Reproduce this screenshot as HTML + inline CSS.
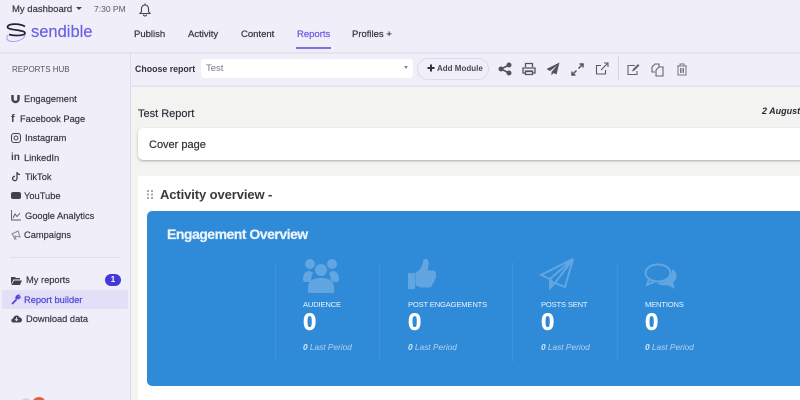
<!DOCTYPE html>
<html lang="en"><head><meta charset="utf-8"><title>Sendible Reports</title>
<style>
html,body{margin:0;padding:0;width:800px;height:400px;overflow:hidden}
body{position:relative;background:#f0eff9;font-family:"Liberation Sans",sans-serif;color:#33323c}
.w{position:absolute;left:0;top:0;width:800px;height:400px;overflow:hidden;filter:blur(.3px)}
.a,.t{position:absolute}
.t{white-space:nowrap;line-height:14px;font-size:9.5px;margin-top:1px}
svg{position:absolute;overflow:visible}
.n{font-size:9.5px;font-weight:normal;color:#3b3a44;top:27px;-webkit-text-stroke:.25px #3b3a44}
.s{font-size:9.3px;color:#3b3a44;-webkit-text-stroke:.2px #3b3a44}
.lab{font-size:7.6px;letter-spacing:-.17px;color:#eaf4fc;top:297px}
.zero{font-size:24px;font-weight:bold;color:#fff;top:314px;line-height:16px;-webkit-text-stroke:.5px #fff}
.lp{font-size:8.3px;font-style:italic;color:#b5d4ee;top:339px}
.lp b{color:#d5e7f6}
.vl{position:absolute;top:262px;height:100px;width:1px;background:#3c92dc}
</style></head><body><div class="w">
<div class="a" style="left:0;top:52px;width:800px;height:2px;background:#e4e3ef"></div>
<div class="a" style="left:130px;top:54px;width:1px;height:346px;background:#dcdbe8"></div>
<div class="a" style="left:131px;top:85px;width:669px;height:2px;background:#e4e3ef"></div>
<div class="a" style="left:131px;top:87px;width:669px;height:313px;background:#f3f3f1"></div>

<!-- top -->
<div class="t" style="left:12px;top:2px;font-size:9.5px;color:#3b3a44;-webkit-text-stroke:.2px #3b3a44">My dashboard</div>
<div class="a" style="left:76px;top:7px;border:3px solid transparent;border-top:3px solid #44434d"></div>
<div class="t" style="left:94px;top:1px;font-size:8.5px;color:#5a5963">7:30 PM</div>
<svg style="left:138px;top:2px" width="14" height="15" viewBox="0 0 14 15"><path d="M2 11.5h10l-1.5-2V6.500a3.500 3.500 0 0 0-7 0v3zM5.500 12.500a1.500 1.500 0 0 0 3 0M7 1.500V3" fill="none" stroke="#44434d" stroke-width="1.100"/></svg>

<!-- logo -->
<svg style="left:6px;top:23px" width="22" height="19" viewBox="0 0 22 19"><path d="M2 12C-1 16 2 18.500 7 18.500 13 18.500 20 15 19 11" fill="none" stroke="#a79cf0" stroke-width="1"/><path d="M19 3.500C13 0 2 .5 1.500 4 1.500 7.500 19 6.500 19 10 19 13 8 13 3 11.500" fill="none" stroke="#25243a" stroke-width="1.700"/></svg>
<div class="t" style="left:31px;top:21px;font-size:16.500px;line-height:20px;color:#6d62e4;-webkit-text-stroke:.2px #6d62e4">sendible</div>

<!-- nav -->
<div class="t n" style="left:134px">Publish</div>
<div class="t n" style="left:188px">Activity</div>
<div class="t n" style="left:241px">Content</div>
<div class="t n" style="left:297px;color:#6a5fe0;-webkit-text-stroke:.25px #6a5fe0">Reports</div>
<div class="t n" style="left:352px">Profiles +</div>
<div class="a" style="left:296px;top:47px;width:35px;height:1.500px;background:#7b70e6"></div>

<!-- toolbar -->
<div class="t" style="left:135px;top:61px;font-size:8.800px;font-weight:bold;color:#33323c">Choose report</div>
<div class="a" style="left:201px;top:59px;width:212px;height:19px;background:#fff;border-radius:3px"></div>
<div class="t" style="left:206px;top:61px;font-size:9.500px;color:#77767f">Test</div>
<div class="a" style="left:404px;top:66px;border:2px solid transparent;border-top:3px solid #88878f"></div>
<div class="a" style="left:417px;top:58px;width:70px;height:20px;border:1px solid #dbdae8;border-radius:11px"></div>
<svg style="left:427px;top:64px" width="8" height="8"><path d="M4 .5v7M.5 4h7" stroke="#33323c" stroke-width="2"/></svg>
<div class="t" style="left:437px;top:61px;font-size:8px;font-weight:bold;color:#4a4954">Add Module</div>
<svg style="left:498px;top:62px" width="14" height="14" viewBox="0 0 14 14"><path d="M11 3L3 7l8 4" fill="none" stroke="#55545e" stroke-width="1.600"/><circle cx="11" cy="3" r="2.500" fill="#55545e"/><circle cx="3" cy="7" r="2.500" fill="#55545e"/><circle cx="11" cy="11" r="2.500" fill="#55545e"/></svg>
<svg style="left:522px;top:62px" width="14" height="14" viewBox="0 0 14 14"><path d="M3.500 5V1.500h7V5M1 6h12v5h-2.500V9h-7v2H1zM3.500 9.500h7v3h-7z" fill="none" stroke="#55545e" stroke-width="1.300"/></svg>
<svg style="left:546px;top:62px" width="14" height="14" viewBox="0 0 14 14"><path d="M13.500.5L.5 7l3.500 2L11 3.500 5.500 10v3.500l2-2.500 3 1.500z" fill="#55545e"/></svg>
<svg style="left:571px;top:63px" width="13" height="13" viewBox="0 0 13 13"><path d="M7.500 5.500L12 1M1 12l4.500-4.500M8.500 1H12v3.500M1 8.500V12h3.500" fill="none" stroke="#55545e" stroke-width="1.500"/></svg>
<svg style="left:595px;top:62px" width="14" height="14" viewBox="0 0 14 14"><path d="M10.500 8v4H1.500V3.500H6M6 8l7-7M9 1h4v4" fill="none" stroke="#5a5963" stroke-width="1.100"/></svg>
<div class="a" style="left:618px;top:56px;width:1px;height:24px;background:#d6d5e2"></div>
<svg style="left:627px;top:63px" width="13" height="13" viewBox="0 0 13 13"><path d="M10 8v3.500H1v-9h7" fill="none" stroke="#66656f" stroke-width="1.100"/><path d="M5 8.500l1-2.500 5-5 1.500 1.500-5 5z" fill="#66656f"/></svg>
<svg style="left:651px;top:63px" width="13" height="14" viewBox="0 0 13 14"><path d="M4 9H1V4l3-3h4v3M5 7l3-3h4v9H5z" fill="none" stroke="#66656f" stroke-width="1.100"/></svg>
<svg style="left:676px;top:63px" width="12" height="13" viewBox="0 0 12 13"><path d="M1 3h10M4 3V1h4v2M2 3v9h8V3M4.500 5v5M6 5v5M7.500 5v5" fill="none" stroke="#777680" stroke-width="1"/></svg>

<!-- sidebar -->
<div class="t" style="left:12px;top:62px;font-size:8px;color:#55545e">REPORTS HUB</div>
<svg style="left:11px;top:95px" width="9" height="9"><path d="M1.500 0v4a3 3 0 0 0 6 0V0" fill="none" stroke="#44434d" stroke-width="2.500"/></svg>
<div class="t s" style="left:24px;top:91px">Engagement</div>
<div class="t" style="left:11px;top:111px;font-size:11px;font-weight:bold;color:#44434d">f</div>
<div class="t s" style="left:20px;top:111px">Facebook Page</div>
<svg style="left:11px;top:133px" width="10" height="10"><rect x=".5" y=".5" width="9" height="9" rx="2.500" fill="none" stroke="#44434d"/><circle cx="5" cy="5" r="2" fill="none" stroke="#44434d"/></svg>
<div class="t s" style="left:25px;top:130px">Instagram</div>
<div class="t" style="left:11px;top:150px;font-size:10px;font-weight:bold;color:#44434d">in</div>
<div class="t s" style="left:24px;top:150px">LinkedIn</div>
<svg style="left:11px;top:171px" width="10" height="11" viewBox="0 0 10 11"><path d="M6 1v6.500a2.200 2.200 0 1 1-2-2.200M6 1.500c.5 1.500 1.500 2 3 2" fill="none" stroke="#44434d" stroke-width="1.300"/></svg>
<div class="t s" style="left:25px;top:169px">TikTok</div>
<div class="a" style="left:11px;top:192px;width:10px;height:7px;background:#44434d;border-radius:2px"></div>
<div class="t s" style="left:24px;top:188px">YouTube</div>
<svg style="left:11px;top:210px" width="10" height="11"><path d="M.5 0v10h9.500M2 8l2-4 2 2.500L9 3" fill="none" stroke="#5a5963" stroke-width=".9"/></svg>
<div class="t s" style="left:25px;top:208px">Google Analytics</div>
<svg style="left:11px;top:230px" width="11" height="10"><path d="M1 4l6-3 2 6-5-1 1 3H3.500L2.500 6z" fill="none" stroke="#888791" stroke-width="1"/></svg>
<div class="t s" style="left:24px;top:227px">Campaigns</div>
<div class="a" style="left:10px;top:257px;width:110px;height:1px;background:#dfdeea"></div>
<svg style="left:11px;top:276px" width="11" height="9"><path d="M0 1h4l1 1h4v1.500H2.500L0 8.500zM3 4.500h8L9 9H.5z" fill="#44434d"/></svg>
<div class="t s" style="left:26px;top:272px">My reports</div>
<div class="a" style="left:105px;top:274px;width:16px;height:12px;border-radius:6px;background:#4438d8;color:#fff;font-size:8px;font-weight:bold;line-height:12px;text-align:center">1</div>
<div class="a" style="left:2px;top:290px;width:126px;height:19px;background:#e2dff7;border-radius:2px"></div>
<svg style="left:11px;top:295px" width="10" height="10"><path d="M1 9l4.500-4.500M9.500 1.500L7.500 3.500 6.500 3 6 2l1.500-1.500C6 .5 4.500 2 5.500 4.500" fill="none" stroke="#4f43dc" stroke-width="1.700"/></svg>
<div class="t s" style="left:24px;top:292px;color:#4f43dc;-webkit-text-stroke:.2px #4f43dc">Report builder</div>
<svg style="left:11px;top:314px" width="11" height="9"><path d="M2.500 8.500a2 2 0 0 1-.3-4A3.300 3.300 0 0 1 8.500 3.500a2.500 2.500 0 0 1 0 5z" fill="#44434d"/><path d="M5.500 3v3.500M4 5.200l1.500 1.500L7 5.200" fill="none" stroke="#f0eff9" stroke-width=".8"/></svg>
<div class="t s" style="left:26px;top:311px">Download data</div>
<div class="a" style="left:32px;top:397px;width:14px;height:14px;border-radius:50%;background:#e0603f"></div>
<div class="a" style="left:21px;top:398px;width:10px;height:10px;border-radius:50%;background:#d8d7df"></div>

<!-- content -->
<div class="t" style="left:138px;top:106px;font-size:11px;color:#33323c;-webkit-text-stroke:.2px #33323c">Test Report</div>
<div class="t" style="left:762px;top:103px;font-size:9px;font-weight:bold;font-style:italic;color:#2a2a30">2 August</div>
<div class="a" style="left:138px;top:128px;width:670px;height:32px;background:#fff;border-radius:5px;box-shadow:0 1px 2px #a9a9a9"></div>
<div class="t" style="left:149px;top:137px;font-size:11px;color:#33323c;-webkit-text-stroke:.2px #33323c">Cover page</div>
<div class="a" style="left:138px;top:176px;width:662px;height:224px;background:#fff"></div>
<svg style="left:147px;top:190px" width="6" height="9" fill="#a9a9a9"><rect width="2" height="2"/><rect x="4" width="2" height="2"/><rect y="3.500" width="2" height="2"/><rect x="4" y="3.500" width="2" height="2"/><rect y="7" width="2" height="2"/><rect x="4" y="7" width="2" height="2"/></svg>
<div class="t" style="left:160px;top:187px;font-size:13px;font-weight:bold;color:#3a3a3e;letter-spacing:-.1px">Activity overview -</div>
<div class="a" style="left:147px;top:211px;width:670px;height:175px;background:#2f8bd8;border-radius:5px"></div>
<div class="t" style="left:167px;top:226px;font-size:14px;font-weight:bold;color:#eaf4fc;letter-spacing:-.5px;-webkit-text-stroke:.25px #eaf4fc">Engagement Overview</div>

<div class="vl" style="left:275px"></div><div class="vl" style="left:379px"></div><div class="vl" style="left:512px"></div><div class="vl" style="left:617px"></div>

<svg style="left:302px;top:257px" width="38" height="36" viewBox="0 0 38 36" fill="#62a6e1"><circle cx="8" cy="7" r="5"/><circle cx="30" cy="7" r="5"/><circle cx="19" cy="13" r="6"/><path d="M1 23c0-7 3-9 7-9l3 2c-1 2-2 5-2 9H2zM37 23c0-7-3-9-7-9l-3 2c1 2 2 5 2 9h7zM6 36V31c0-7 5-10 13-10s13 3 13 10v5z"/></svg>
<svg style="left:407px;top:258px" width="30" height="33" viewBox="0 0 30 33"><path d="M1 15h7v16H1z" fill="#62a6e1"/><path d="M9 15c4-2 7-6 8-13 3-2 5 1 4 5l-1 6h6c3 0 3 3 2 4 1 2 0 4-1 4 0 2 0 4-2 4 0 3-1 4-3 4H14l-5-2z" fill="#62a6e1" stroke="#62a6e1"/></svg>
<svg style="left:540px;top:258px" width="35" height="34" viewBox="0 0 35 34"><path d="M33 1L1 17l9 4zM33 1L15 25l10 4zM33 1L10 21v9l5-5" fill="none" stroke="#62a6e1" stroke-width="2"/><path d="M11 21l4 4-5 5z" fill="#62a6e1"/></svg>
<svg style="left:644px;top:263px" width="36" height="28" viewBox="0 0 36 28"><ellipse cx="14" cy="10" rx="12.500" ry="8.500" fill="none" stroke="#62a6e1" stroke-width="2"/><path d="M5 16l-2 6 7-3" fill="none" stroke="#62a6e1" stroke-width="2"/><path d="M28 6c6 3 6 10 1 13l2 7-8-4c-4 1-7 0-10-2 8 0 16-5 15-14z" fill="#62a6e1"/></svg>

<div class="t lab" style="left:303px">AUDIENCE</div>
<div class="t lab" style="left:408px">POST ENGAGEMENTS</div>
<div class="t lab" style="left:541px">POSTS SENT</div>
<div class="t lab" style="left:645px">MENTIONS</div>
<div class="t zero" style="left:303px">0</div>
<div class="t zero" style="left:408px">0</div>
<div class="t zero" style="left:541px">0</div>
<div class="t zero" style="left:645px">0</div>
<div class="t lp" style="left:303px"><b>0</b> Last Period</div>
<div class="t lp" style="left:408px"><b>0</b> Last Period</div>
<div class="t lp" style="left:541px"><b>0</b> Last Period</div>
<div class="t lp" style="left:645px"><b>0</b> Last Period</div>
</div></body></html>
